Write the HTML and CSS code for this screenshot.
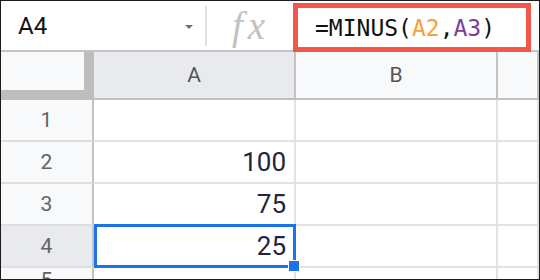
FILE: index.html
```html
<!DOCTYPE html>
<html lang="en">
    <head>
        <meta charset="UTF-8">
        <title>MINUS</title>
        <link rel="stylesheet" href="styles.css">
    </head>
    <body>
        <div class="frame">
            <div class="toolbar">
                <div class="namebox">
                    <span>A4</span>
                    <span class="caret"></span>
                </div>
                <div class="divider"></div>
                <div class="fx">fx</div>
                <div class="formula">=MINUS(<span class="ref-a">A2</span>,<span class="ref-b">A3</span>)</div>
            </div>
            <div class="sheet">
                <div class="corner"></div>
                <div class="col-head active">A</div>
                <div class="col-head">B</div>
                <div class="col-head"></div>

                <div class="row-head">1</div>
                <div class="cell"></div>
                <div class="cell"></div>
                <div class="cell"></div>

                <div class="row-head">2</div>
                <div class="cell num">100</div>
                <div class="cell"></div>
                <div class="cell"></div>

                <div class="row-head">3</div>
                <div class="cell num">75</div>
                <div class="cell"></div>
                <div class="cell"></div>

                <div class="row-head active">4</div>
                <div class="cell num selected">
                    25
                    <div class="selection"><div class="handle"></div></div>
                </div>
                <div class="cell"></div>
                <div class="cell"></div>

                <div class="row-head">5</div>
                <div class="cell"></div>
                <div class="cell"></div>
                <div class="cell"></div>
            </div>
        </div>
    </body>
</html>
```

FILE: styles.css
```css
body {
    margin: 0;
    font-family: Roboto, "Noto Sans", sans-serif;
}
.frame {
    width: 540px;
    height: 280px;
    box-sizing: border-box;
    border: 1px solid #1c1c1c;
    overflow: hidden;
    background: #fff;
}
.toolbar {
    display: flex;
    align-items: center;
    height: 51px;
    box-sizing: border-box;
    border-bottom: 2px solid #c4c4c4;
}
.namebox {
    width: 204px;
    flex: none;
    box-sizing: border-box;
    padding: 0 12px 0 17px;
    display: flex;
    align-items: center;
    justify-content: space-between;
    font-size: 24px;
    color: #111;
}
.caret {
    width: 0;
    height: 0;
    border-left: 4px solid transparent;
    border-right: 4px solid transparent;
    border-top: 4px solid #6f6f6f;
    margin-top: 2px;
}
.divider {
    width: 2px;
    height: 40px;
    flex: none;
    background: #e0e0e0;
}
.fx {
    width: 86px;
    flex: none;
    box-sizing: border-box;
    padding-left: 25px;
    font-family: "Liberation Serif", serif;
    font-style: italic;
    font-size: 39px;
    letter-spacing: 5px;
    color: #c2c2c2;
    line-height: 1;
}
.formula {
    flex: 1;
    align-self: stretch;
    margin: 2px 8px -2px 0;
    position: relative;
    z-index: 1;
    border: 5px solid #f2574e;
    display: flex;
    align-items: center;
    padding-left: 17px;
    font-family: "DejaVu Sans Mono", monospace;
    font-size: 23px;
    color: #111;
}
.ref-a {
    color: #f7a13b;
}
.ref-b {
    color: #7d3d9c;
}
.sheet {
    display: grid;
    grid-template-columns: 93px 202px 202px 1fr;
    grid-template-rows: 48px repeat(4, 42px) 1fr;
}
.sheet > div {
    box-sizing: border-box;
}
.corner {
    background: #f8f9fa;
    border-right: 10px solid #bdbdbd;
    border-bottom: 10px solid #bdbdbd;
}
.col-head {
    background: #f8f9fa;
    border-right: 2px solid #c4c4c4;
    border-bottom: 2px solid #c0c0c0;
    display: flex;
    align-items: center;
    justify-content: center;
    font-size: 21px;
    color: #555;
}
.col-head.active {
    background: #e8eaed;
}
.row-head {
    background: #f8f9fa;
    border-right: 2px solid #c2c2c2;
    border-bottom: 2px solid #dedede;
    display: flex;
    align-items: center;
    justify-content: center;
    font-size: 21px;
    color: #5f6368;
}
.row-head.active {
    background: #e8eaed;
}
.cell {
    border-right: 2px solid #e2e2e2;
    border-bottom: 2px solid #e2e2e2;
}
.num {
    text-align: right;
    padding-right: 8px;
    font-size: 26px;
    line-height: 40px;
    color: #23233b;
}
.selected {
    position: relative;
}
.selection {
    position: absolute;
    left: 0;
    top: -2px;
    width: 202px;
    height: 44px;
    box-sizing: border-box;
    border: 3px solid #1a73e8;
}
.handle {
    position: absolute;
    left: 191px;
    top: 33px;
    width: 10px;
    height: 10px;
    background: #1a73e8;
    border: 1px solid #fff;
}
```
